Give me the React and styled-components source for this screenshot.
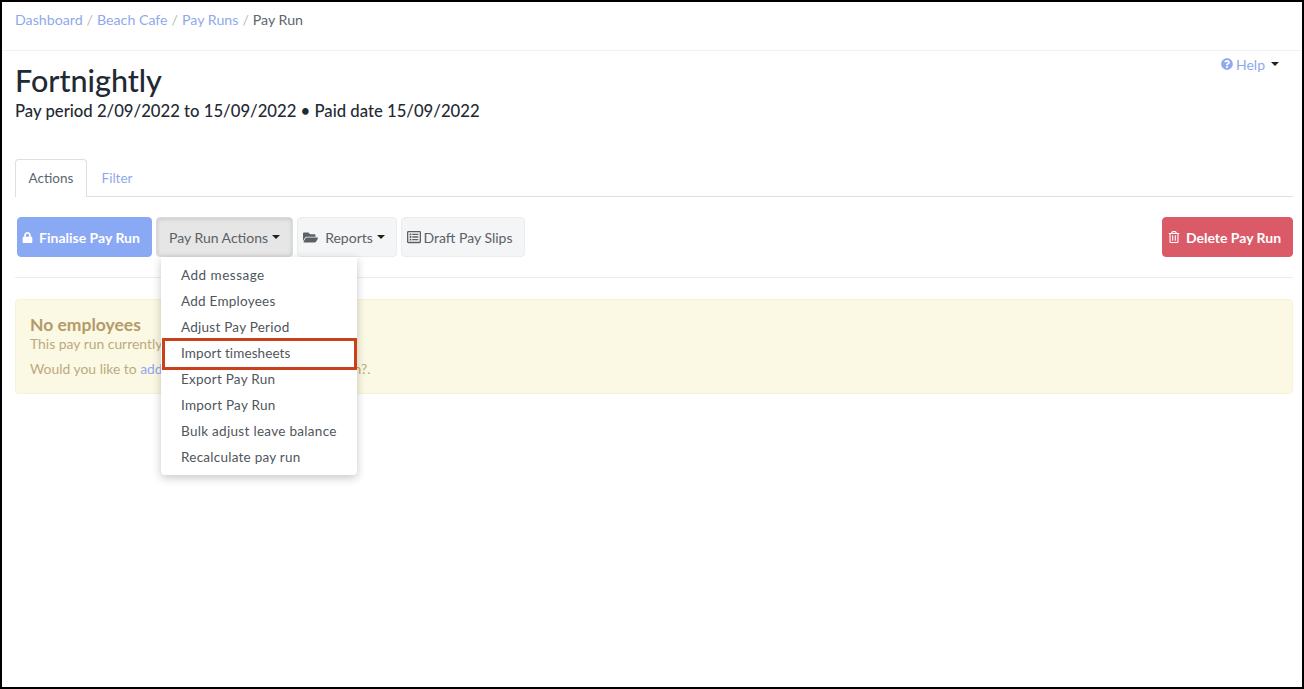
import styled, { createGlobalStyle } from 'styled-components';
import { FaLock, FaFolderOpen, FaRegListAlt, FaRegTrashAlt, FaQuestionCircle } from 'react-icons/fa';

const GlobalStyle = createGlobalStyle`
  html, body {
    margin: 0;
    padding: 0;
    background: #fff;
  }
  body {
    font-family: Lato, "Open Sans", sans-serif;
    color: #212b36;
  }
  * {
    box-sizing: border-box;
  }
`;

const Frame = styled.div`
  width: 1304px;
  height: 689px;
  border: 2px solid #000;
  overflow: hidden;
  background: #fff;
`;

const Breadcrumbs = styled.nav`
  height: 49px;
  padding: 9px 13px 0;
  display: flex;
  gap: 4px;
  font-size: 14.2px;
  line-height: 18px;
  border-bottom: 1px solid #f0f1f3;
`;

const Crumb = styled.a`
  color: ${props => (props.$current ? '#5c6670' : '#8fa9ec')};
`;

const Slash = styled.span`
  color: #b5bbc2;
`;

const Header = styled.header`
  display: flex;
  justify-content: space-between;
  padding: 0 13px;
`;

const TitleBlock = styled.div`
  padding-top: 11px;
`;

const Title = styled.h1`
  margin: 0;
  font-size: 30.5px;
  line-height: 36px;
  font-weight: 500;
  color: #1f2a33;
`;

const Subtitle = styled.p`
  margin: 2px 0 0;
  font-size: 16.7px;
  line-height: 22px;
  font-weight: 500;
  color: #1f2a33;
`;

const Help = styled.a`
  display: flex;
  align-items: center;
  gap: 3px;
  height: 18px;
  margin: 4px 10px 0 0;
  font-size: 14px;
  color: #8fa9ec;
`;

const Caret = styled.span`
  display: inline-block;
  width: 0;
  height: 0;
  margin-left: ${props => props.$gap || 4}px;
  border-top: 4px solid #222;
  border-left: 4px solid transparent;
  border-right: 4px solid transparent;
`;

const Tabs = styled.div`
  display: flex;
  height: 38px;
  margin: 37px 9px 0 13px;
  border-bottom: 1px solid #dcdfe3;
`;

const Tab = styled.a`
  width: ${props => props.$width}px;
  height: ${props => (props.$active ? 38 : 37)}px;
  padding-bottom: 1px;
  display: flex;
  align-items: center;
  justify-content: center;
  font-size: 13.5px;
  color: ${props => (props.$active ? '#5c6670' : '#8fa9ec')};
  background: #fff;
  border: 1px solid ${props => (props.$active ? '#dcdfe3' : 'transparent')};
  border-bottom: none;
  border-radius: 4px 4px 0 0;
`;

const Toolbar = styled.div`
  position: relative;
  display: flex;
  gap: 4px;
  margin: 20px 9px 0 13px;
  padding: 0 0 20px 2px;
  border-bottom: 1px solid #e9ebee;
`;

const Button = styled.button`
  width: ${props => props.$width}px;
  height: 40px;
  padding: 0 ${props => props.$endSpace || 0}px 0 0;
  display: flex;
  align-items: center;
  justify-content: center;
  font-family: inherit;
  font-size: 14px;
  font-weight: ${props => (props.$solid ? 700 : 400)};
  color: ${props => (props.$solid ? '#fff' : '#5b6166')};
  background: ${props => props.$bg || '#f4f5f6'};
  border: 1px solid ${props => props.$line || '#eaecee'};
  border-radius: 4px;
  box-shadow: ${props => (props.$pressed ? 'inset 0 1px 4px rgba(0, 0, 0, 0.14)' : 'none')};

  svg {
    flex-shrink: 0;
    font-size: ${props => props.$iconSize || 11}px;
    margin-right: ${props => props.$iconGap || 5}px;
  }
`;

const DeleteButton = styled(Button)`
  margin-left: auto;
`;

const Menu = styled.ul`
  position: absolute;
  top: 40px;
  left: 146px;
  z-index: 2;
  width: 196px;
  margin: 0;
  padding: 5px 0;
  list-style: none;
  background: #fff;
  border-radius: 0 0 4px 4px;
  box-shadow: 0 3px 10px rgba(0, 0, 0, 0.22);
`;

const MenuItem = styled.li`
  position: relative;
  height: 26px;
  padding-left: 20px;
  font-size: 13.5px;
  line-height: 26px;
  letter-spacing: ${props => props.$spacing ?? 0.25}px;
  color: #4f565c;
`;

const Highlight = styled.span`
  position: absolute;
  top: -2px;
  left: 1px;
  right: 0;
  height: 32px;
  border: 3px solid #c9401c;
`;

const Alert = styled.div`
  height: 95px;
  margin: 21px 9px 0 13px;
  padding: 15px 14px 0;
  background: #fbf8e3;
  border: 1px solid #f7f2d8;
  border-radius: 4px;
  color: #bcaa80;
  font-size: 13.9px;
  line-height: 18px;
`;

const AlertTitle = styled.h4`
  margin: 0;
  font-size: 17.5px;
  line-height: 20px;
  font-weight: 700;
  color: #b39b68;
`;

const AlertText = styled.p`
  margin: 0 0 7px;
`;

const AlertLink = styled.a`
  color: #8fa9ec;
  word-spacing: 2px;
`;

export default function App() {
  return (
    <Frame>
      <GlobalStyle />
      <Breadcrumbs>
        <Crumb>Dashboard</Crumb>
        <Slash>/</Slash>
        <Crumb>Beach Cafe</Crumb>
        <Slash>/</Slash>
        <Crumb>Pay Runs</Crumb>
        <Slash>/</Slash>
        <Crumb $current>Pay Run</Crumb>
      </Breadcrumbs>

      <Header>
        <TitleBlock>
          <Title>Fortnightly</Title>
          <Subtitle>Pay period 2/09/2022 to 15/09/2022 • Paid date 15/09/2022</Subtitle>
        </TitleBlock>
        <Help>
          <FaQuestionCircle size={12} />
          Help
          <Caret $gap={3} />
        </Help>
      </Header>

      <Tabs>
        <Tab $active $width={72}>Actions</Tab>
        <Tab $width={60}>Filter</Tab>
      </Tabs>

      <Toolbar>
        <Button $solid $width={135} $bg="#8aa9f5" $line="#8aa9f5" $endSpace={7} $iconGap={6}>
          <FaLock />
          Finalise Pay Run
        </Button>
        <Button $pressed $width={137} $bg="#e6e6e6" $line="#dadada">
          Pay Run Actions
          <Caret />
        </Button>
        <Button $width={100} $iconSize={15} $iconGap={7} $endSpace={6}>
          <FaFolderOpen />
          Reports
          <Caret />
        </Button>
        <Button $width={124} $iconSize={14} $iconGap={3} $endSpace={7}>
          <FaRegListAlt />
          Draft Pay Slips
        </Button>
        <DeleteButton $solid $width={131} $bg="#da5a68" $line="#da5a68" $endSpace={6} $iconSize={12} $iconGap={6}>
          <FaRegTrashAlt />
          Delete Pay Run
        </DeleteButton>

        <Menu>
          <MenuItem $spacing={0.5}>Add message</MenuItem>
          <MenuItem>Add Employees</MenuItem>
          <MenuItem>Adjust Pay Period</MenuItem>
          <MenuItem $spacing={0.1}>
            Import timesheets
            <Highlight />
          </MenuItem>
          <MenuItem>Export Pay Run</MenuItem>
          <MenuItem>Import Pay Run</MenuItem>
          <MenuItem $spacing={0.3}>Bulk adjust leave balance</MenuItem>
          <MenuItem>Recalculate pay run</MenuItem>
        </Menu>
      </Toolbar>

      <Alert>
        <AlertTitle>No employees</AlertTitle>
        <AlertText>This pay run currently has no employees.</AlertText>
        <AlertText>
          Would you like to <AlertLink>add more employees</AlertLink> to this pay run?.
        </AlertText>
      </Alert>
    </Frame>
  );
}
